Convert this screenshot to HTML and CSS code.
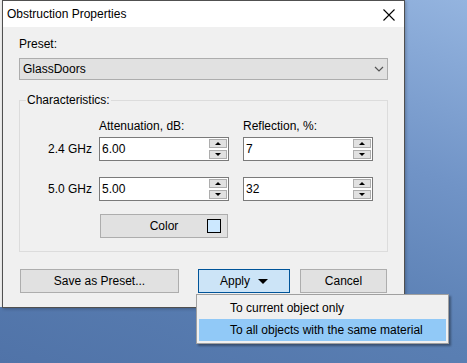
FILE: index.html
```html
<!DOCTYPE html>
<html lang="en">
<head>
    <meta charset="UTF-8">
    <title>Obstruction Properties</title>
    <link rel="stylesheet" href="styles.css">
</head>
<body>
<div class="desktop">
    <div class="behind"></div>
    <div class="dialog">
        <div class="titlebar">
            <span class="title">Obstruction Properties</span>
            <svg class="close" width="12" height="12" viewBox="0 0 12 12">
                <path d="M0.5 0.5 L11.5 11.5 M11.5 0.5 L0.5 11.5" stroke="#000" stroke-width="1.1" fill="none"/>
            </svg>
        </div>
        <div class="content">
            <div class="label">Preset:</div>
            <div class="combo">
                <span>GlassDoors</span>
                <svg width="10" height="6" viewBox="0 0 10 6">
                    <path d="M1 1 L5 5 L9 1" stroke="#555" stroke-width="1.2" fill="none"/>
                </svg>
            </div>
            <fieldset class="group">
                <legend>Characteristics:</legend>
                <div class="row heads">
                    <span class="freq"></span>
                    <span class="cell">Attenuation, dB:</span>
                    <span class="cell">Reflection, %:</span>
                </div>
                <div class="row">
                    <span class="freq">2.4 GHz</span>
                    <div class="cell spin"><span>6.00</span><div class="arrows"><i class="up"></i><i class="down"></i></div></div>
                    <div class="cell spin"><span>7</span><div class="arrows"><i class="up"></i><i class="down"></i></div></div>
                </div>
                <div class="row second">
                    <span class="freq">5.0 GHz</span>
                    <div class="cell spin"><span>5.00</span><div class="arrows"><i class="up"></i><i class="down"></i></div></div>
                    <div class="cell spin"><span>32</span><div class="arrows"><i class="up"></i><i class="down"></i></div></div>
                </div>
                <div class="row third">
                    <span class="freq"></span>
                    <div class="btn color-btn"><span>Color</span><i class="swatch"></i></div>
                </div>
            </fieldset>
            <div class="actions">
                <div class="btn save">Save as Preset...</div>
                <div class="btn apply">Apply <i class="caret"></i></div>
                <div class="btn cancel">Cancel</div>
            </div>
        </div>
    </div>
    <div class="menu">
        <div class="item">To current object only</div>
        <div class="item active">To all objects with the same material</div>
    </div>
</div>
</body>
</html>
```

FILE: styles.css
```css
body, html {
    margin: 0;
    height: 100%;
    overflow: hidden;
}
body {
    font-family: 'Segoe UI', 'Liberation Sans', Arial, sans-serif;
    font-size: 12px;
    color: #000;
}
.desktop {
    position: relative;
    height: 363px;
    display: flex;
    align-items: flex-start;
    background: linear-gradient(200deg, #94b4df 0%, #7194c7 35%, #5a7fb3 65%, #5073a8 100%);
}
.behind {
    width: 2px;
    height: 307px;
    background: #f0f0f0;
}
.dialog {
    width: 401px;
    height: 306px;
    border: 1px solid #505050;
    background: #f0f0f0;
    box-shadow: 1px 1px 3px rgba(0, 0, 0, 0.25);
}
.titlebar {
    height: 26px;
    background: #fff;
    display: flex;
    justify-content: space-between;
    align-items: center;
    padding: 0 9px 0 4px;
}
.close {
    margin-top: 1px;
}
.content {
    padding: 9px 16px 0 16px;
}
.label {
    height: 16px;
    line-height: 16px;
}
.combo {
    margin-top: 6px;
    height: 20px;
    border: 1px solid #adadad;
    background: #e1e1e1;
    display: flex;
    justify-content: space-between;
    align-items: center;
    padding: 0 3px 0 3px;
}
.group {
    margin: 13px 0 0 0;
    padding: 12px 0 14px 0;
    border: 1px solid #dcdcdc;
    min-width: 0;
}
.group legend {
    margin-left: 6px;
    padding: 0 1px;
    line-height: 14px;
}
.row {
    display: flex;
    align-items: center;
    height: 23px;
}
.row.heads {
    height: 18px;
    align-items: flex-start;
}
.row.second {
    margin-top: 17px;
}
.row.third {
    margin-top: 14px;
}
.freq {
    width: 72px;
    text-align: right;
    margin-right: 7px;
}
.cell {
    width: 130px;
}
.cell + .cell {
    margin-left: 14px;
}
.heads .cell {
    line-height: 14px;
}
.spin {
    height: 24px;
    border: 1px solid #7a7a7a;
    background: #fff;
    box-sizing: border-box;
    display: flex;
    justify-content: space-between;
    align-items: center;
    padding-left: 2px;
}
.arrows {
    display: flex;
    flex-direction: column;
    gap: 2px;
    margin-right: 1px;
}
.arrows i {
    width: 18px;
    height: 9px;
    box-sizing: border-box;
    border: 1px solid #adadad;
    background: #e1e1e1;
    display: flex;
    justify-content: center;
    align-items: center;
}
.arrows i::after {
    content: '';
    border-left: 3px solid transparent;
    border-right: 3px solid transparent;
}
.arrows .up::after {
    border-bottom: 3px solid #000;
}
.arrows .down::after {
    border-top: 3px solid #000;
}
.btn {
    box-sizing: border-box;
    height: 24px;
    border: 1px solid #adadad;
    background: #e1e1e1;
    display: flex;
    justify-content: center;
    align-items: center;
}
.color-btn {
    width: 128px;
    margin-left: 1px;
    position: relative;
}
.swatch {
    position: absolute;
    right: 6px;
    top: 4px;
    width: 14px;
    height: 14px;
    box-sizing: border-box;
    border: 1px solid #000;
    background: #cce8ff;
}
.actions {
    display: flex;
    margin-top: 17px;
    padding-left: 1px;
}
.save {
    width: 159px;
}
.apply {
    width: 92px;
    margin-left: 19px;
    background: #cce4f7;
    border-color: #005499;
    gap: 8px;
}
.caret {
    width: 0;
    height: 0;
    border-left: 5px solid transparent;
    border-right: 5px solid transparent;
    border-top: 5px solid #000;
    margin-top: 1px;
}
.cancel {
    width: 87px;
    margin-left: 10px;
}
.menu {
    position: absolute;
    left: 196px;
    top: 294px;
    width: 253px;
    box-sizing: border-box;
    border: 1px solid #a0a0a0;
    background: #f0f0f0;
    padding: 2px;
    box-shadow: 2px 2px 2px rgba(0, 0, 0, 0.35);
}
.item {
    height: 22px;
    line-height: 22px;
    padding-left: 31px;
}
.item.active {
    background: #91c9f7;
}
```
